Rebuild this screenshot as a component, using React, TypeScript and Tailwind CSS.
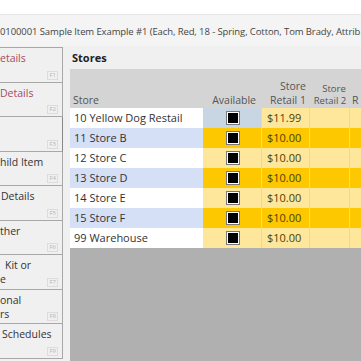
import React from "react"

const navItems = [
  { lines: ["etails"], key: "F1", red: true, indent: 0 },
  { lines: ["Details"], key: "F2", red: true, indent: 0 },
  { lines: [""], key: "F3", focus: true, indent: 0 },
  { lines: ["hild Item"], key: "F4", indent: 0 },
  { lines: ["Details"], key: "F5", indent: 1 },
  { lines: ["ther"], key: "F6", indent: 0 },
  { lines: ["Kit or", "e"], key: "F7", indent: 0, firstIndent: 5 },
  { lines: ["onal", "rs"], key: "F8", indent: 0 },
  { lines: ["Schedules"], key: "F9", indent: 2 },
]

const stores = [
  "10 Yellow Dog Restail",
  "11 Store B",
  "12 Store C",
  "13 Store D",
  "14 Store E",
  "15 Store F",
  "99 Warehouse",
]

function Check() {
  return (
    <div className="w-[14px] h-[14px] border border-[#7a7a7a] bg-white p-px">
      <div className="w-full h-full bg-black" />
    </div>
  )
}

export default function App() {
  return (
    <div className="w-[361px] h-[361px] overflow-hidden bg-[#f0f0f0] font-['Open_Sans',sans-serif] text-[#333] flex flex-col">
      {/* top strip */}
      <div className="h-[15px] shrink-0 bg-white border-b border-[#e6e6e6]" />
      <div className="h-[31px] shrink-0 bg-[#f4f4f4] flex items-center whitespace-nowrap overflow-hidden text-[9.5px] tracking-[-0.1px] text-[#444] pt-[4px]">
        0100001 Sample Item Example #1 (Each, Red, 18 - Spring, Cotton, Tom Brady, Attrib
      </div>

      <div className="flex flex-1 min-h-0">
        {/* side nav */}
        <div className="w-[63px] shrink-0 flex flex-col pt-[1px]">
          <div className="flex flex-col border-t border-[#a8a8a8]">
            {navItems.map((item) => (
              <div
                key={item.key}
                className={`relative h-[34.5px] shrink-0 border-b border-r border-[#a8a8a8] bg-[#f0f0f0] text-[10.5px] leading-[14px] pt-[3px] ${
                  item.focus ? "border-r-dotted border-r-[#888]" : ""
                } ${item.red ? "text-[#a64b63]" : "text-[#333]"}`}
              >
                {item.lines.map((l, i) => (
                  <div
                    key={i}
                    style={{ paddingLeft: i === 0 && item.firstIndent ? item.firstIndent : item.indent }}
                    className="whitespace-nowrap"
                  >
                    {l}
                  </div>
                ))}
                <div className="absolute right-[4px] bottom-[2px] border border-[#dcdcdc] px-[1px] text-[6px] leading-[7px] text-[#b5b5b5]">
                  {item.key}
                </div>
              </div>
            ))}
          </div>
        </div>

        {/* main panel */}
        <div className="flex-1 flex flex-col pl-[7px] min-w-0">
          <div className="h-[23px] shrink-0 flex items-center pl-[2px] pt-[1px] text-[11px] font-bold text-[#222]">
            Stores
          </div>
          <div className="flex-1 flex flex-col bg-[#b0b0b0] min-w-0">
            {/* header */}
            <div className="grid grid-cols-[133px_59px_48px_40px_1fr] h-[39px] bg-[#d4d4d4] text-[10.5px] leading-[14px] text-[#555] shrink-0">
              <div className="flex items-end pl-[3px] pb-[1px]">Store</div>
              <div className="flex items-end justify-end pr-[6px] pb-[1px]">Available</div>
              <div className="flex flex-col justify-end items-end pr-[4px] pb-[1px] text-right">
                <span>Store</span>
                <span>Retail 1</span>
              </div>
              <div className="flex flex-col justify-end items-center pb-[1px] text-center text-[9.5px] leading-[12px]">
                <span className="pl-[8px]">Store</span>
                <span>Retail 2</span>
              </div>
              <div className="flex items-end pl-[2px] pb-[1px] overflow-hidden">R</div>
            </div>

            {/* rows */}
            {stores.map((s, i) => {
              const odd = i % 2 === 1
              const yellow = odd ? "bg-[#fec800]" : "bg-[#fee79a]"
              return (
                <div key={s} className="grid grid-cols-[133px_59px_48px_40px_1fr] h-[20px] shrink-0 text-[11px]">
                  <div className={`flex items-center pl-[4px] ${odd ? "bg-[#d5dff5]" : "bg-white"} text-[#333]`}>
                    {s}
                  </div>
                  <div
                    className={`flex items-center justify-center pl-[2px] border-r border-[#e8d9a6] ${
                      i === 0 ? "bg-[#c8d5e2]" : yellow
                    }`}
                  >
                    <Check />
                  </div>
                  <div className={`flex items-center pl-[5px] border-r border-[#e8d9a6] text-[#4e4000] ${yellow}`}>
                    {i === 0 ? "$11.99" : "$10.00"}
                  </div>
                  <div className={`border-r border-[#e8d9a6] ${yellow}`} />
                  <div className={yellow} />
                </div>
              )
            })}
          </div>
        </div>
      </div>
    </div>
  )
}
